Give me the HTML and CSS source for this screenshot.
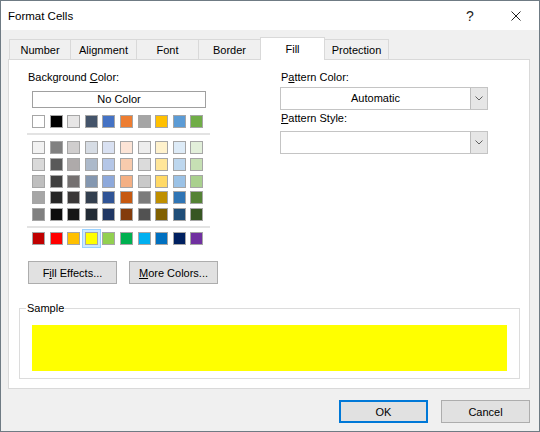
FILE: index.html
```html
<!DOCTYPE html>
<html lang="en">
<head>
<meta charset="UTF-8">
<title>Format Cells</title>
<link rel="stylesheet" href="styles.css">
</head>
<body>

<div class="dialog">
  <div class="titlebar">
    <span class="title">Format Cells</span>
    <span class="title-btn">?</span>
    <span class="title-btn">
      <svg width="10" height="10" viewBox="0 0 10 10"><path d="M0.5 0.5L9.5 9.5M9.5 0.5L0.5 9.5" stroke="#222" stroke-width="1" fill="none"/></svg>
    </span>
  </div>

  <div class="dialog-body">
    <div class="tabs">
      <div class="tab tab-number">Number</div>
      <div class="tab tab-alignment">Alignment</div>
      <div class="tab tab-font">Font</div>
      <div class="tab tab-border">Border</div>
      <div class="tab tab-fill tab-active">Fill</div>
      <div class="tab tab-protection">Protection</div>
    </div>

    <div class="panel">
      <div class="panel-top">
        <div class="bg-col">
          <div class="field-label">Background <u>C</u>olor:</div>
          <div class="no-color">No Color</div>
          <div class="swatches" id="themeRow"></div>
          <div class="sep"></div>
          <div class="swatches shades" id="shadeRows"></div>
          <div class="sep"></div>
          <div class="swatches" id="standardRow"></div>
          <div class="btn-row">
            <button class="btn" type="button">F<u>i</u>ll Effects...</button>
            <button class="btn" type="button"><u>M</u>ore Colors...</button>
          </div>
        </div>

        <div class="pattern-col">
          <div class="field-label">P<u>a</u>ttern Color:</div>
          <div class="combo">
            <span class="combo-value">Automatic</span>
            <span class="combo-arrow"><svg width="8" height="5" viewBox="0 0 8 5"><path d="M0.5 0.5L4 4L7.5 0.5" stroke="#606060" fill="none"/></svg></span>
          </div>
          <div class="field-label field-label-2"><u>P</u>attern Style:</div>
          <div class="combo combo-2">
            <span class="combo-value"></span>
            <span class="combo-arrow"><svg width="8" height="5" viewBox="0 0 8 5"><path d="M0.5 0.5L4 4L7.5 0.5" stroke="#606060" fill="none"/></svg></span>
          </div>
        </div>
      </div>

      <fieldset class="sample">
        <legend>Sample</legend>
        <div class="sample-fill"></div>
      </fieldset>
    </div>

    <div class="footer">
      <button class="btn btn-default" type="button">OK</button>
      <button class="btn" type="button">Cancel</button>
    </div>
  </div>
</div>

<script>
    const themeColors = ['#ffffff', '#000000', '#e7e6e6', '#44546a', '#4472c4', '#ed7d31', '#a5a5a5', '#ffc000', '#5b9bd5', '#70ad47'];
    const shadeColors = [
      '#f2f2f2', '#808080', '#d0cece', '#d6dce4', '#d9e1f2', '#fce4d6', '#ededed', '#fff2cc', '#ddebf7', '#e2efda',
      '#d9d9d9', '#595959', '#aeaaaa', '#acb9ca', '#b4c6e7', '#f8cbad', '#dbdbdb', '#ffe699', '#bdd7ee', '#c6e0b4',
      '#bfbfbf', '#404040', '#757171', '#8497b0', '#8ea9db', '#f4b084', '#c9c9c9', '#ffd966', '#9bc2e6', '#a9d08e',
      '#a6a6a6', '#262626', '#3a3838', '#333f4f', '#305496', '#c65911', '#7b7b7b', '#bf8f00', '#2f75b5', '#548235',
      '#808080', '#0d0d0d', '#161616', '#222b35', '#203764', '#833c0c', '#525252', '#806000', '#1f4e78', '#375623'
    ];
    const standardColors = ['#c00000', '#ff0000', '#ffc000', '#ffff00', '#92d050', '#00b050', '#00b0f0', '#0070c0', '#002060', '#7030a0'];

    function fillSwatches(id, list, selected) {
      const box = document.getElementById(id);
      list.forEach(function(color) {
        const sw = document.createElement('div');
        sw.className = 'swatch';
        if (color === selected) sw.classList.add('swatch-selected');
        sw.style.backgroundColor = color;
        box.appendChild(sw);
      });
    }

    fillSwatches('themeRow', themeColors);
    fillSwatches('shadeRows', shadeColors);
    fillSwatches('standardRow', standardColors, '#ffff00');
</script>

</body>
</html>
```

FILE: styles.css
```css
* {
    box-sizing: border-box;
}

body {
    margin: 0;
    font-family: "Liberation Sans", Arial, sans-serif;
    font-size: 11px;
    color: #000;
    background: #3b5566;
}

.dialog {
    width: 540px;
    height: 432px;
    border: 1px solid #6f7b84;
    background: #f0f0f0;
    display: flex;
    flex-direction: column;
}

.titlebar {
    height: 29px;
    background: #fff;
    display: flex;
    align-items: center;
}

.title {
    flex: 1;
    padding-left: 7px;
    font-size: 11.5px;
}

.title-btn {
    width: 46px;
    height: 29px;
    display: flex;
    align-items: center;
    justify-content: center;
    font-size: 14px;
    color: #222;
}

.dialog-body {
    flex: 1;
    padding: 0 9px 0 7px;
}

/* tabs */
.tabs {
    display: flex;
    align-items: flex-end;
    height: 22px;
    margin-top: 7px;
    padding-left: 1px;
}

.tab {
    height: 20px;
    border: 1px solid #d9d9d9;
    border-bottom: none;
    background: #f0f0f0;
    text-align: center;
    line-height: 18px;
    padding-top: 1px;
    margin-left: -1px;
}

.tab:first-child {
    margin-left: 0;
}

.tab-number { width: 62px; }
.tab-alignment { width: 67px; }
.tab-font { width: 63px; }
.tab-border { width: 63px; }
.tab-fill { width: 65px; }
.tab-protection { width: 65px; }

.tab-active {
    height: 23px;
    background: #fff;
    margin-bottom: -1px;
    position: relative;
    z-index: 1;
    line-height: 20px;
    padding-top: 1px;
}

/* panel */
.panel {
    height: 330px;
    background: #fff;
    border: 1px solid #d9d9d9;
    padding: 10px 9px 0 10px;
}

.panel-top {
    display: flex;
}

.bg-col {
    width: 184px;
    margin-left: 8px;
}

.pattern-col {
    width: 208px;
    margin-left: 69px;
}

.field-label {
    line-height: 15px;
    padding-left: 1px;
}

.field-label-2 {
    margin-top: 1px;
}

.no-color {
    height: 17px;
    margin: 6px 5px 0;
    border: 1px solid #a0a0a0;
    text-align: center;
    line-height: 15px;
}

.swatches {
    display: grid;
    grid-template-columns: repeat(10, 13px);
    column-gap: 4.6px;
    row-gap: 3.75px;
    margin: 7px 0 0 5px;
}

.swatch {
    width: 13px;
    height: 13px;
    border: 1px solid #a6a6a6;
}

.swatch-selected {
    box-shadow: 0 0 0 2px #cce8ff, 0 0 0 3px #99d1ff;
}

.sep {
    height: 2px;
    width: 183px;
    margin-top: 5px;
    background: #e3e3e3;
}

.sep + .swatches {
    margin-top: 6px;
}

#standardRow {
    margin-top: 4px;
}

.btn-row {
    display: flex;
    gap: 12px;
    margin: 16px 0 0 1px;
}

.btn {
    flex-shrink: 0;
    width: 89px;
    height: 23px;
    padding: 0;
    background: #e1e1e1;
    border: 1px solid #adadad;
    font: inherit;
    color: #000;
}

/* combo boxes */
.combo {
    height: 23px;
    margin-top: 2px;
    border: 1px solid #c4c4c4;
    display: flex;
    background: #fff;
}

.combo-2 {
    margin-top: 5px;
}

.combo-value {
    flex: 1;
    text-align: center;
    line-height: 21px;
}

.combo-arrow {
    width: 17px;
    background: #e6e6e6;
    border-left: 1px solid #bdbdbd;
    display: flex;
    align-items: center;
    justify-content: center;
}

/* sample */
.sample {
    margin: 17px 0 0 0;
    padding: 9px 12px 7px 6px;
    border: 1px solid #dcdcdc;
}

.sample legend {
    padding: 0 1px;
    line-height: 15px;
}

.sample-fill {
    height: 46px;
    margin-left: 6px;
    background: #ffff00;
}

/* footer */
.footer {
    display: flex;
    justify-content: flex-end;
    gap: 13px;
    margin-top: 11px;
}

.btn-default {
    border-color: #0078d7;
    box-shadow: inset 0 0 0 1px #0078d7;
}
```
